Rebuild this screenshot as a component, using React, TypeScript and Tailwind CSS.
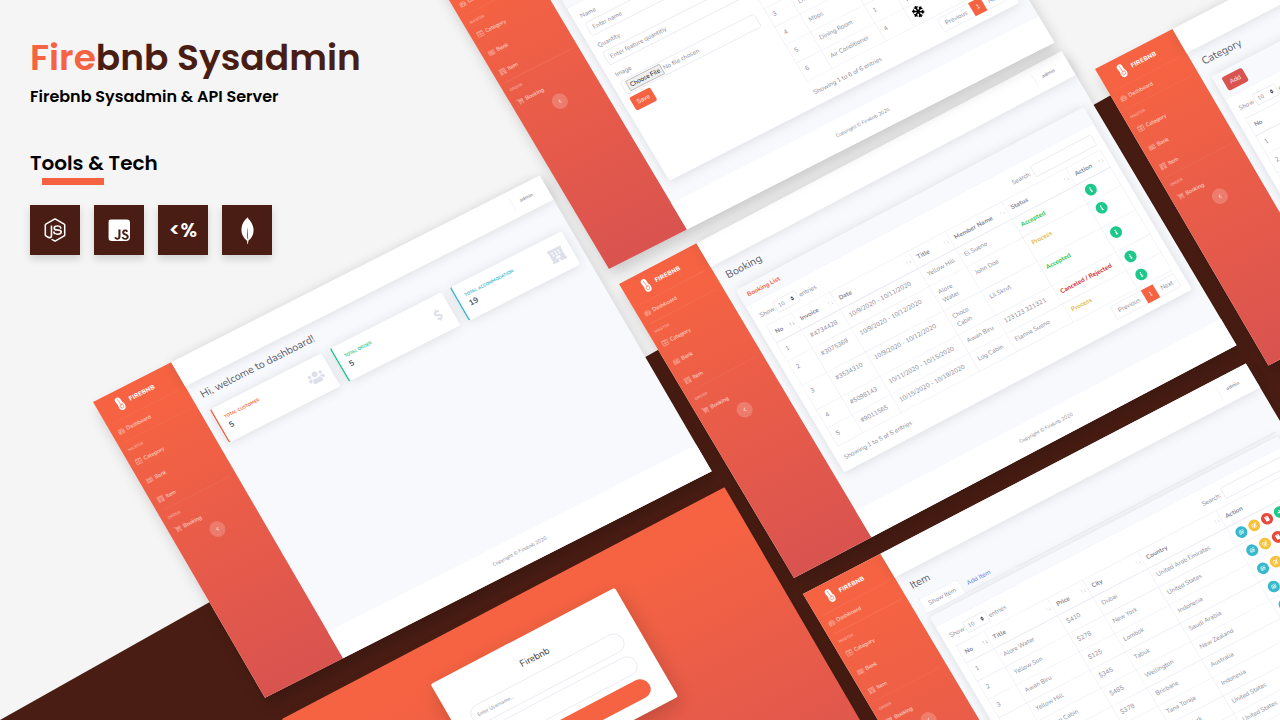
import type { ReactNode } from 'react';
import {
  FaAngleLeft,
  FaDollarSign,
  FaEdit,
  FaHotel,
  FaInfo,
  FaJs,
  FaMoneyCheck,
  FaNodeJs,
  FaPlus,
  FaRegImages,
  FaShoppingCart,
  FaSnowflake,
  FaSort,
  FaTable,
  FaTachometerAlt,
  FaTrash,
  FaUsers,
  FaUtensils,
} from 'react-icons/fa';
import { SiMongodb } from 'react-icons/si';

function NavLink({ icon, label }: { icon: ReactNode; label: string }) {
  return (
    <a href="#" className="flex h-[55px] items-center gap-1 px-4 text-sm text-white/80">
      <span className="flex w-5 justify-start text-lg text-white/35">{icon}</span>
      {label}
    </a>
  );
}

function Logo() {
  return (
    <svg viewBox="0 0 20 36" className="h-9 w-5" aria-hidden="true">
      <path
        fill="#fff"
        d="M9 0c4.6 0 7.4 3 7.6 7.4l.3 9.2c2 1.6 3.1 4.200 3.100 7.400 0 6.600-4 12-9.400 12C5.400 36 2 31.600 2 25.600c0-2.400.5-4.300 1.300-6L1.500 8C1 3.400 4.400 0 9 0Z"
      />
      <path
        fill="none"
        stroke="#f56342"
        strokeWidth="1.500"
        strokeDasharray="2 2"
        strokeLinecap="round"
        d="M9 5l1.500 17M6 24.500c0 7.500 9.500 7.500 9.500-.5 0-5-6-5.500-9.500.5Z"
      />
    </svg>
  );
}

function Sidebar() {
  return (
    <nav className="w-56 shrink-0 bg-linear-to-b from-[#f56342] from-10% to-[#d9534f] text-white">
      <div className="flex h-[70px] items-center justify-center gap-4 pr-5 text-base font-extrabold tracking-wide">
        <Logo />
        FIREBNB
      </div>
      <hr className="mx-4 border-white/15" />
      <div className="-mt-px">
        <NavLink icon={<FaTachometerAlt />} label="Dashboard" />
      </div>
      <hr className="mx-4 mb-4 border-white/15" />
      <div className="px-4 text-[10px] leading-[15px] font-extrabold text-white/40">MASTER</div>
      <NavLink icon={<FaTable />} label="Category" />
      <NavLink icon={<FaMoneyCheck />} label="Bank" />
      <NavLink icon={<FaHotel />} label="Item" />
      <hr className="mx-4 mb-4 border-white/15" />
      <div className="px-4 text-[10px] leading-[15px] font-extrabold text-white/40">ORDER</div>
      <NavLink icon={<FaShoppingCart />} label="Booking" />
      <button
        aria-label="Collapse sidebar"
        className="mx-auto -mt-0.5 flex size-10 items-center justify-center rounded-full bg-white/20 text-white/60"
      >
        <FaAngleLeft />
      </button>
    </nav>
  );
}

function Screen({ place, title, children }: { place: string; title: string; children: ReactNode }) {
  return (
    <section
      className={`absolute flex min-h-[860px] w-[1280px] origin-top-left bg-[#f8f9fc] text-base text-[#858796] shadow-[0_20px_36px_rgba(0,0,0,0.17)] ${place}`}
    >
      <Sidebar />
      <div className="flex min-w-0 grow flex-col">
        <div className="flex h-[70px] shrink-0 items-center justify-end bg-white pr-10 text-[13px] font-semibold shadow-[0_2px_28px_rgba(58,59,69,0.15)]">
          <span className="mr-5 h-9 border-l border-[#e3e6f0]" />
          admin
        </div>
        <main className="grow px-6 pt-5">
          <h1 className="text-[27px] leading-[36px] text-[#5a5c69]">{title}</h1>
          {children}
        </main>
        <footer className="mt-6 flex h-[77px] shrink-0 items-center justify-center bg-white text-[13px]">
          Copyright © Firebnb 2020
        </footer>
      </div>
    </section>
  );
}

function Card({ header, children }: { header: ReactNode; children: ReactNode }) {
  return (
    <div className="rounded-md border border-[#e3e6f0] bg-white shadow-[0_2px_28px_rgba(58,59,69,0.15)]">
      <div className="rounded-t-md border-b border-[#e3e6f0] bg-[#f8f9fc] px-5">{header}</div>
      <div className="p-5">{children}</div>
    </div>
  );
}

function TableControls() {
  return (
    <div className="mb-3.5 flex h-[31px] items-center justify-between">
      <label className="flex items-center gap-1">
        Show
        <span className="relative">
          <select className="h-[31px] w-16 appearance-none rounded border border-[#d1d3e2] bg-white px-2 text-sm">
            <option>10</option>
          </select>
          <FaSort className="absolute top-2 right-2 size-3.5 text-[#4a4c58]" />
        </span>
        entries
      </label>
      <label className="flex items-center gap-2">
        Search:
        <input className="h-[31px] w-[176px] rounded border border-[#d1d3e2] bg-white px-2" />
      </label>
    </div>
  );
}

function Pagination() {
  return (
    <div className="flex h-[38px]">
      <button className="w-[90px] rounded-l border border-[#dddfeb]">Previous</button>
      <button className="w-[34px] bg-[#f56342] text-white">1</button>
      <button className="w-[60px] rounded-r border border-[#dddfeb]">Next</button>
    </div>
  );
}

function TableFooter({ info }: { info: string }) {
  return (
    <div className="mt-2 flex items-center justify-between">
      <p className="pt-3">{info}</p>
      <Pagination />
    </div>
  );
}

type Column = { name: string; width: string; sort?: 'on' | 'off' };

function Grid({ columns, rows }: { columns: Column[]; rows: ReactNode[][] }) {
  return (
    <table className="w-full table-fixed border-collapse border border-[#e3e6f0]">
      <thead>
        <tr>
          {columns.map((c) => (
            <th
              key={c.name}
              className={`h-[50px] border border-b-2 border-[#e3e6f0] px-3 text-left font-bold ${c.width}`}
            >
              <span className="flex items-center justify-between whitespace-nowrap">
                {c.name}
                {c.sort && (
                  <span
                    className={
                      c.sort === 'on'
                        ? '-mr-2 text-base font-normal text-[#858796]'
                        : '-mr-2 text-base font-normal text-[#858796]/50'
                    }
                  >
                    ↑↓
                  </span>
                )}
              </span>
            </th>
          ))}
        </tr>
      </thead>
      <tbody>
        {rows.map((row, i) => (
          <tr key={i}>
            {row.map((cell, j) => (
              <td key={j} className="border border-[#e3e6f0] px-3 py-[11px] align-top">
                {cell}
              </td>
            ))}
          </tr>
        ))}
      </tbody>
    </table>
  );
}

function Round({ tone, label, children }: { tone: string; label: string; children: ReactNode }) {
  return (
    <button
      aria-label={label}
      className={`flex size-[30px] items-center justify-center rounded-full text-sm text-white ${tone}`}
    >
      {children}
    </button>
  );
}

function Stat({ tone, label, value, icon }: { tone: string; label: string; value: string; icon: ReactNode }) {
  return (
    <div
      className={`flex h-24 items-center justify-between rounded-md border-l-4 bg-white px-5 shadow-[0_2px_28px_rgba(58,59,69,0.15)] ${tone}`}
    >
      <div>
        <div className="mb-1 text-[11px] leading-4 font-bold">{label}</div>
        <div className="text-xl leading-6 font-bold text-[#5a5c69]">{value}</div>
      </div>
      <span className="text-[#dddfeb]">{icon}</span>
    </div>
  );
}

function DashboardScreen() {
  return (
    <Screen
      title="Hi, welcome to dashboard!"
      place="left-[93px] top-[402px] transform-[matrix(0.349,-0.177,0.2,0.344,0,0)]"
    >
      <div className="mt-6 grid grid-cols-3 gap-6">
        <Stat tone="border-[#f56342] text-[#f56342]" label="TOTAL CUSTOMER" value="5" icon={<FaUsers className="size-11" />} />
        <Stat tone="border-[#1cc88a] text-[#1cc88a]" label="TOTAL ORDER" value="5" icon={<FaDollarSign className="size-8" />} />
        <Stat tone="border-[#36b9cc] text-[#36b9cc]" label="TOTAL ACCOMMODATION" value="19" icon={<FaHotel className="size-10" />} />
      </div>
    </Screen>
  );
}

const accepted = <b className="text-[#2cc54a]">Accepted</b>;
const process = <b className="text-[#e5b93c]">Process</b>;
const rejected = <b className="whitespace-nowrap text-[#d3262f]">Canceled / Rejected</b>;
const info = (
  <Round tone="bg-[#1cc88a]" label="Details">
    <FaInfo />
  </Round>
);

const bookings: ReactNode[][] = [
  ['1', '#4734428', '10/9/2020 - 10/11/2020', 'Yellow Hill', 'El Sueno', accepted, info],
  ['2', '#3075369', '10/9/2020 - 10/12/2020', <>Alore<br />Water</>, 'John Doe', process, info],
  ['3', '#3534310', '10/9/2020 - 10/12/2020', <>Choco<br />Cabin</>, 'Lil Skrut', accepted, info],
  ['4', '#5098143', '10/11/2020 - 10/15/2020', 'Awan Biru', '123123 321321', rejected, info],
  ['5', '#9011565', '10/15/2020 - 10/19/2020', 'Log Cabin', 'Elanne Sueno', process, info],
];

function BookingScreen() {
  return (
    <Screen
      title="Booking"
      place="left-[619px] top-[284px] transform-[matrix(0.3457,-0.182,0.2035,0.342,0,0)]"
    >
      <div className="mt-6">
        <Card header={<h2 className="py-3 leading-6 font-bold text-[#f56342]">Booking List</h2>}>
          <TableControls />
          <Grid
            columns={[
              { name: 'No', width: 'w-[72px]', sort: 'on' },
              { name: 'Invoice', width: 'w-[112px]', sort: 'off' },
              { name: 'Date', width: 'w-[226px]', sort: 'off' },
              { name: 'Title', width: 'w-[108px]', sort: 'off' },
              { name: 'Member Name', width: 'w-[163px]', sort: 'off' },
              { name: 'Status', width: 'w-[185px]', sort: 'off' },
              { name: 'Action', width: 'w-[100px]', sort: 'off' },
            ]}
            rows={bookings}
          />
          <TableFooter info="Showing 1 to 5 of 5 entries" />
        </Card>
      </div>
    </Screen>
  );
}

function FeatureScreen() {
  return (
    <Screen
      title="Detail Item"
      place="left-[434px] -top-[25px] transform-[matrix(0.348,-0.177,0.2035,0.342,0,0)]"
    >
      <div className="mt-6">
        <Card header={<h2 className="py-[26px] leading-6 font-bold text-[#f56342]">Feature</h2>}>
          <div className="flex items-start gap-7">
            <form className="w-[386px] shrink-0">
              <label className="mb-4 block">
                Name
                <input
                  placeholder="Enter name"
                  className="mt-2 block h-[38px] w-full rounded-md border border-[#d1d3e2] px-3 placeholder:text-[#858796]"
                />
              </label>
              <label className="mb-4 block">
                Quantity
                <input
                  placeholder="Enter feature quantitiy"
                  className="mt-2 block h-[38px] w-full rounded-md border border-[#d1d3e2] px-3 placeholder:text-[#858796]"
                />
              </label>
              <label className="mb-2 block">
                Image
                <input
                  type="file"
                  className="mt-2 block h-[38px] w-full rounded-md border border-[#d1d3e2] px-3 pt-1 file:mr-1 file:h-7 file:border file:border-[#767676] file:bg-[#efefef] file:px-1.5 file:text-black"
                />
              </label>
              <button type="button" className="h-[38px] w-[60px] rounded-md bg-[#f56342] text-white">
                Save
              </button>
            </form>
            <div className="min-w-0 grow pt-[47px]">
              <Grid
                columns={[
                  { name: 'No', width: 'w-[72px]' },
                  { name: 'Name', width: 'w-[154px]' },
                  { name: 'Qty', width: 'w-[82px]' },
                  { name: 'Image', width: 'w-[131px]' },
                  { name: 'Action', width: 'w-[113px]' },
                ]}
                rows={[
                  ['1', 'Bedroom', '5', '', info],
                  ['2', 'Bathroom', '3', '', info],
                  ['3', 'Living Room', '1', '', info],
                  ['4', 'Mbps', '10', '', info],
                  ['5', 'Dining Room', '1', <FaUtensils className="size-7 text-black" />, info],
                  ['6', 'Air Conditioner', '4', <FaSnowflake className="-my-1 size-8 text-black" />, info],
                ]}
              />
              <TableFooter info="Showing 1 to 6 of 6 entries" />
            </div>
          </div>
        </Card>
      </div>
    </Screen>
  );
}

function CategoryScreen() {
  return (
    <Screen
      title="Category"
      place="left-[1095px] top-[69px] transform-[matrix(0.346,-0.1786,0.2017,0.3448,0,0)]"
    >
      <div className="mt-6">
        <Card
          header={
            <div className="py-3.5">
              <button className="h-[38px] w-[58px] rounded-md bg-[#d9534f] text-white">Add</button>
            </div>
          }
        >
          <TableControls />
          <Grid
            columns={[
              { name: 'No', width: 'w-[200px]' },
              { name: 'Name', width: 'w-[500px]' },
              { name: 'Action', width: 'w-[266px]' },
            ]}
            rows={[
              ['1', 'Houses with beauty backyard', info],
              ['2', 'Hotels with large living room', info],
              ['3', 'Apartment with kitchen set', info],
            ]}
          />
          <TableFooter info="Showing 1 to 3 of 3 entries" />
        </Card>
      </div>
    </Screen>
  );
}

const itemActions = (
  <span className="flex gap-[7px]">
    <Round tone="bg-[#36b9cc]" label="Images">
      <FaRegImages />
    </Round>
    <Round tone="bg-[#f6c23e]" label="Edit">
      <FaEdit />
    </Round>
    <Round tone="bg-[#e74a3b]" label="Delete">
      <FaTrash />
    </Round>
    <Round tone="bg-[#1cc88a]" label="Add feature">
      <FaPlus />
    </Round>
  </span>
);

const items: string[][] = [
  ['Alore Water', '$410', 'Dubai', 'United Arab Emirates'],
  ['Yellow Sun', '$278', 'New York', 'United States'],
  ['Awan Biru', '$125', 'Lombok', 'Indonesia'],
  ['Yellow Hill', '$345', 'Tabuk', 'Saudi Arabia'],
  ['Choco Cabin', '$485', 'Wellington', 'New Zealand'],
  ['Log Cabin', '$378', 'Brisbane', 'Australia'],
  ['Green Park', '$320', 'Tana Toraja', 'Indonesia'],
  ['Silver Rain', '$290', 'New York', 'United States'],
  ['Blue Lake', '$210', 'New York', 'United States'],
  ['Podo Wae', '$180', 'Madison', 'United States'],
];

function ItemScreen() {
  return (
    <Screen
      title="Item"
      place="left-[803px] top-[594px] transform-[matrix(0.346,-0.18,0.2035,0.342,0,0)]"
    >
      <div className="mt-5 mb-2.5 flex h-[42px] border-b border-[#dddfeb]">
        <a href="#" className="flex w-[112px] items-center justify-center rounded-t-md border border-b-0 border-[#dddfeb] bg-white">
          Show Item
        </a>
        <a href="#" className="flex items-center px-4 text-[#4e73df]">
          Add Item
        </a>
      </div>
      <Card header={<div className="h-7" />}>
        <TableControls />
        <Grid
          columns={[
            { name: 'No', width: 'w-[81px]', sort: 'on' },
            { name: 'Title', width: 'w-[183px]', sort: 'off' },
            { name: 'Price', width: 'w-[102px]', sort: 'off' },
            { name: 'City', width: 'w-[158px]', sort: 'off' },
            { name: 'Country', width: 'w-[228px]', sort: 'off' },
            { name: 'Action', width: 'w-[214px]', sort: 'off' },
          ]}
          rows={items.map((cells, i) => [String(i + 1), ...cells, itemActions])}
        />
        <TableFooter info="Showing 1 to 10 of 19 entries" />
      </Card>
    </Screen>
  );
}

function LoginScreen() {
  return (
    <section className="absolute top-[719px] left-[282px] flex h-[860px] w-[1280px] origin-top-left transform-[matrix(0.3457,-0.1811,0.2,0.3437,0,0)] items-start justify-center bg-linear-to-b from-[#f56342] from-10% to-[#d9534f] pt-24 shadow-[0_20px_36px_rgba(0,0,0,0.17)]">
      <form className="w-[533px] rounded-md bg-white px-12 pt-12 pb-9 text-[13px] shadow-[0_16px_48px_rgba(0,0,0,0.18)]">
        <h2 className="mb-6 text-center text-2xl leading-[27px] text-[#3a3b45]">Firebnb</h2>
        <input
          aria-label="Username"
          placeholder="Enter Username..."
          className="mb-4 block h-[50px] w-full rounded-full border border-[#d1d3e2] px-4 placeholder:text-[#858796]"
        />
        <input
          aria-label="Password"
          type="password"
          placeholder="Password"
          className="mb-4 block h-[50px] w-full rounded-full border border-[#d1d3e2] px-4 placeholder:text-[#858796]"
        />
        <button type="button" className="h-[50px] w-full rounded-full bg-[#f56342] text-white">
          Login
        </button>
      </form>
    </section>
  );
}

function Tech({ children }: { children: ReactNode }) {
  return (
    <li className="flex size-[50px] items-center justify-center bg-[#491d13] text-white shadow-[0_4px_8px_rgba(0,0,0,0.15)]">
      {children}
    </li>
  );
}

export default function App() {
  return (
    <div className="relative h-screen w-full overflow-hidden bg-[#f5f5f5] font-['Nunito','Open_Sans',sans-serif]">
      <div className="absolute inset-0 bg-[#491d13] [clip-path:polygon(0_100%,100%_0,100%_100%)]" />
      <DashboardScreen />
      <BookingScreen />
      <FeatureScreen />
      <CategoryScreen />
      <LoginScreen />
      <ItemScreen />
      <header className="relative w-fit px-[30px] pt-[33px] font-['Poppins','Inter',sans-serif] font-semibold text-black">
        <h1 className="text-4xl leading-[50px] text-[#491d13]">
          <span className="text-[#f56342]">Fire</span>bnb Sysadmin
        </h1>
        <p className="mt-0.5 text-base leading-6">Firebnb Sysadmin &amp; API Server</p>
        <h2 className="mt-[38px] text-xl leading-8">Tools &amp; Tech</h2>
        <div className="-mt-px ml-3 h-[7px] w-[62px] bg-[#f56342]" />
        <ul className="mt-5 flex gap-3.5">
          <Tech>
            <FaNodeJs className="size-6" />
          </Tech>
          <Tech>
            <span className="flex size-[22px] items-center justify-center overflow-hidden rounded-sm">
              <FaJs className="size-[25px] shrink-0" />
            </span>
          </Tech>
          <Tech>
            <span className="text-xl">&lt;%</span>
          </Tech>
          <Tech>
            <SiMongodb className="size-[27px]" />
          </Tech>
        </ul>
      </header>
    </div>
  );
}
